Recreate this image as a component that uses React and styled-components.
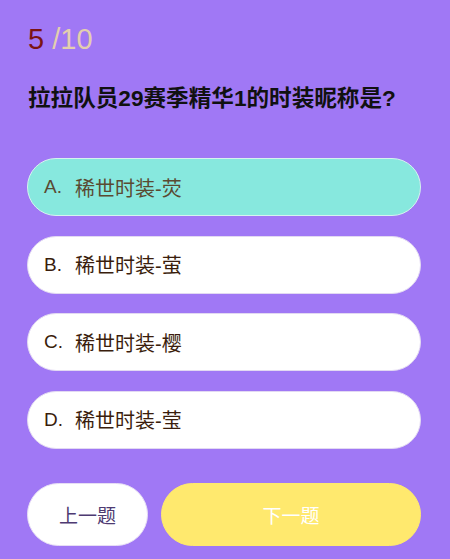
import React, { useState } from "react";
import styled, { createGlobalStyle } from "styled-components";

const Global = createGlobalStyle`
  html, body { margin: 0; padding: 0; }
  body {
    background: #a078f5;
    font-family: "Liberation Sans", "Noto Sans CJK SC", sans-serif;
  }
`;

const Page = styled.div`
  box-sizing: border-box;
  width: 450px;
  min-height: 559px;
  padding: 19px 29px 0 27px;
  background: #a078f5;
  display: flex;
  flex-direction: column;
`;

const Counter = styled.div`
  font-size: 29px;
  line-height: 40px;
  height: 40px;
  padding-left: 1px;
`;

const Current = styled.span`
  color: #7a1414;
`;

const Total = styled.span`
  color: #e3cfae;
`;

const Question = styled.h1`
  margin: 25px 0 0 1px;
  font-size: 22.6px;
  line-height: 30px;
  font-weight: 700;
  color: #111;
`;

const Options = styled.div`
  margin-top: 44px;
  display: flex;
  flex-direction: column;
  gap: 19.5px;
`;

const Option = styled.button`
  box-sizing: border-box;
  height: 58px;
  width: 100%;
  border-radius: 29px;
  border: 1px solid ${(p) => (p.$active ? "#d6f3ef" : "#e2d9f2")};
  background: ${(p) => (p.$active ? "#87e8de" : "#ffffff")};
  color: ${(p) => (p.$active ? "#5a4a32" : "#3a1d0c")};
  display: flex;
  align-items: center;
  padding: 0 0 0 16px;
  font-family: inherit;
  font-size: 20px;
  text-align: left;
  cursor: pointer;
`;

const Letter = styled.span`
  display: inline-block;
  width: 31px;
  font-size: 19px;
`;

const Footer = styled.div`
  margin-top: 34px;
  display: flex;
  gap: 13px;
`;

const NavButton = styled.button`
  box-sizing: border-box;
  height: 63px;
  border-radius: 32px;
  border: 1px solid ${(p) => (p.$primary ? "#ffe96e" : "#e6ddf5")};
  background: ${(p) => (p.$primary ? "#ffe96e" : "#ffffff")};
  color: ${(p) => (p.$primary ? "#ffffff" : "#4e3a72")};
  font-family: inherit;
  font-size: 19px;
  flex: ${(p) => (p.$primary ? "1" : "0 0 121px")};
  cursor: pointer;
`;

const options = [
  { key: "A", text: "稀世时装-荧" },
  { key: "B", text: "稀世时装-萤" },
  { key: "C", text: "稀世时装-樱" },
  { key: "D", text: "稀世时装-莹" },
];

export default function App() {
  const [selected, setSelected] = useState("A");
  return (
    <>
      <Global />
      <Page>
        <Counter>
          <Current>5</Current>
          <Total> /10</Total>
        </Counter>
        <Question>拉拉队员29赛季精华1的时装昵称是?</Question>
        <Options>
          {options.map((o) => (
            <Option
              key={o.key}
              $active={selected === o.key}
              onClick={() => setSelected(o.key)}
            >
              <Letter>{o.key}.</Letter>
              {o.text}
            </Option>
          ))}
        </Options>
        <Footer>
          <NavButton>上一题</NavButton>
          <NavButton $primary>下一题</NavButton>
        </Footer>
      </Page>
    </>
  );
}
